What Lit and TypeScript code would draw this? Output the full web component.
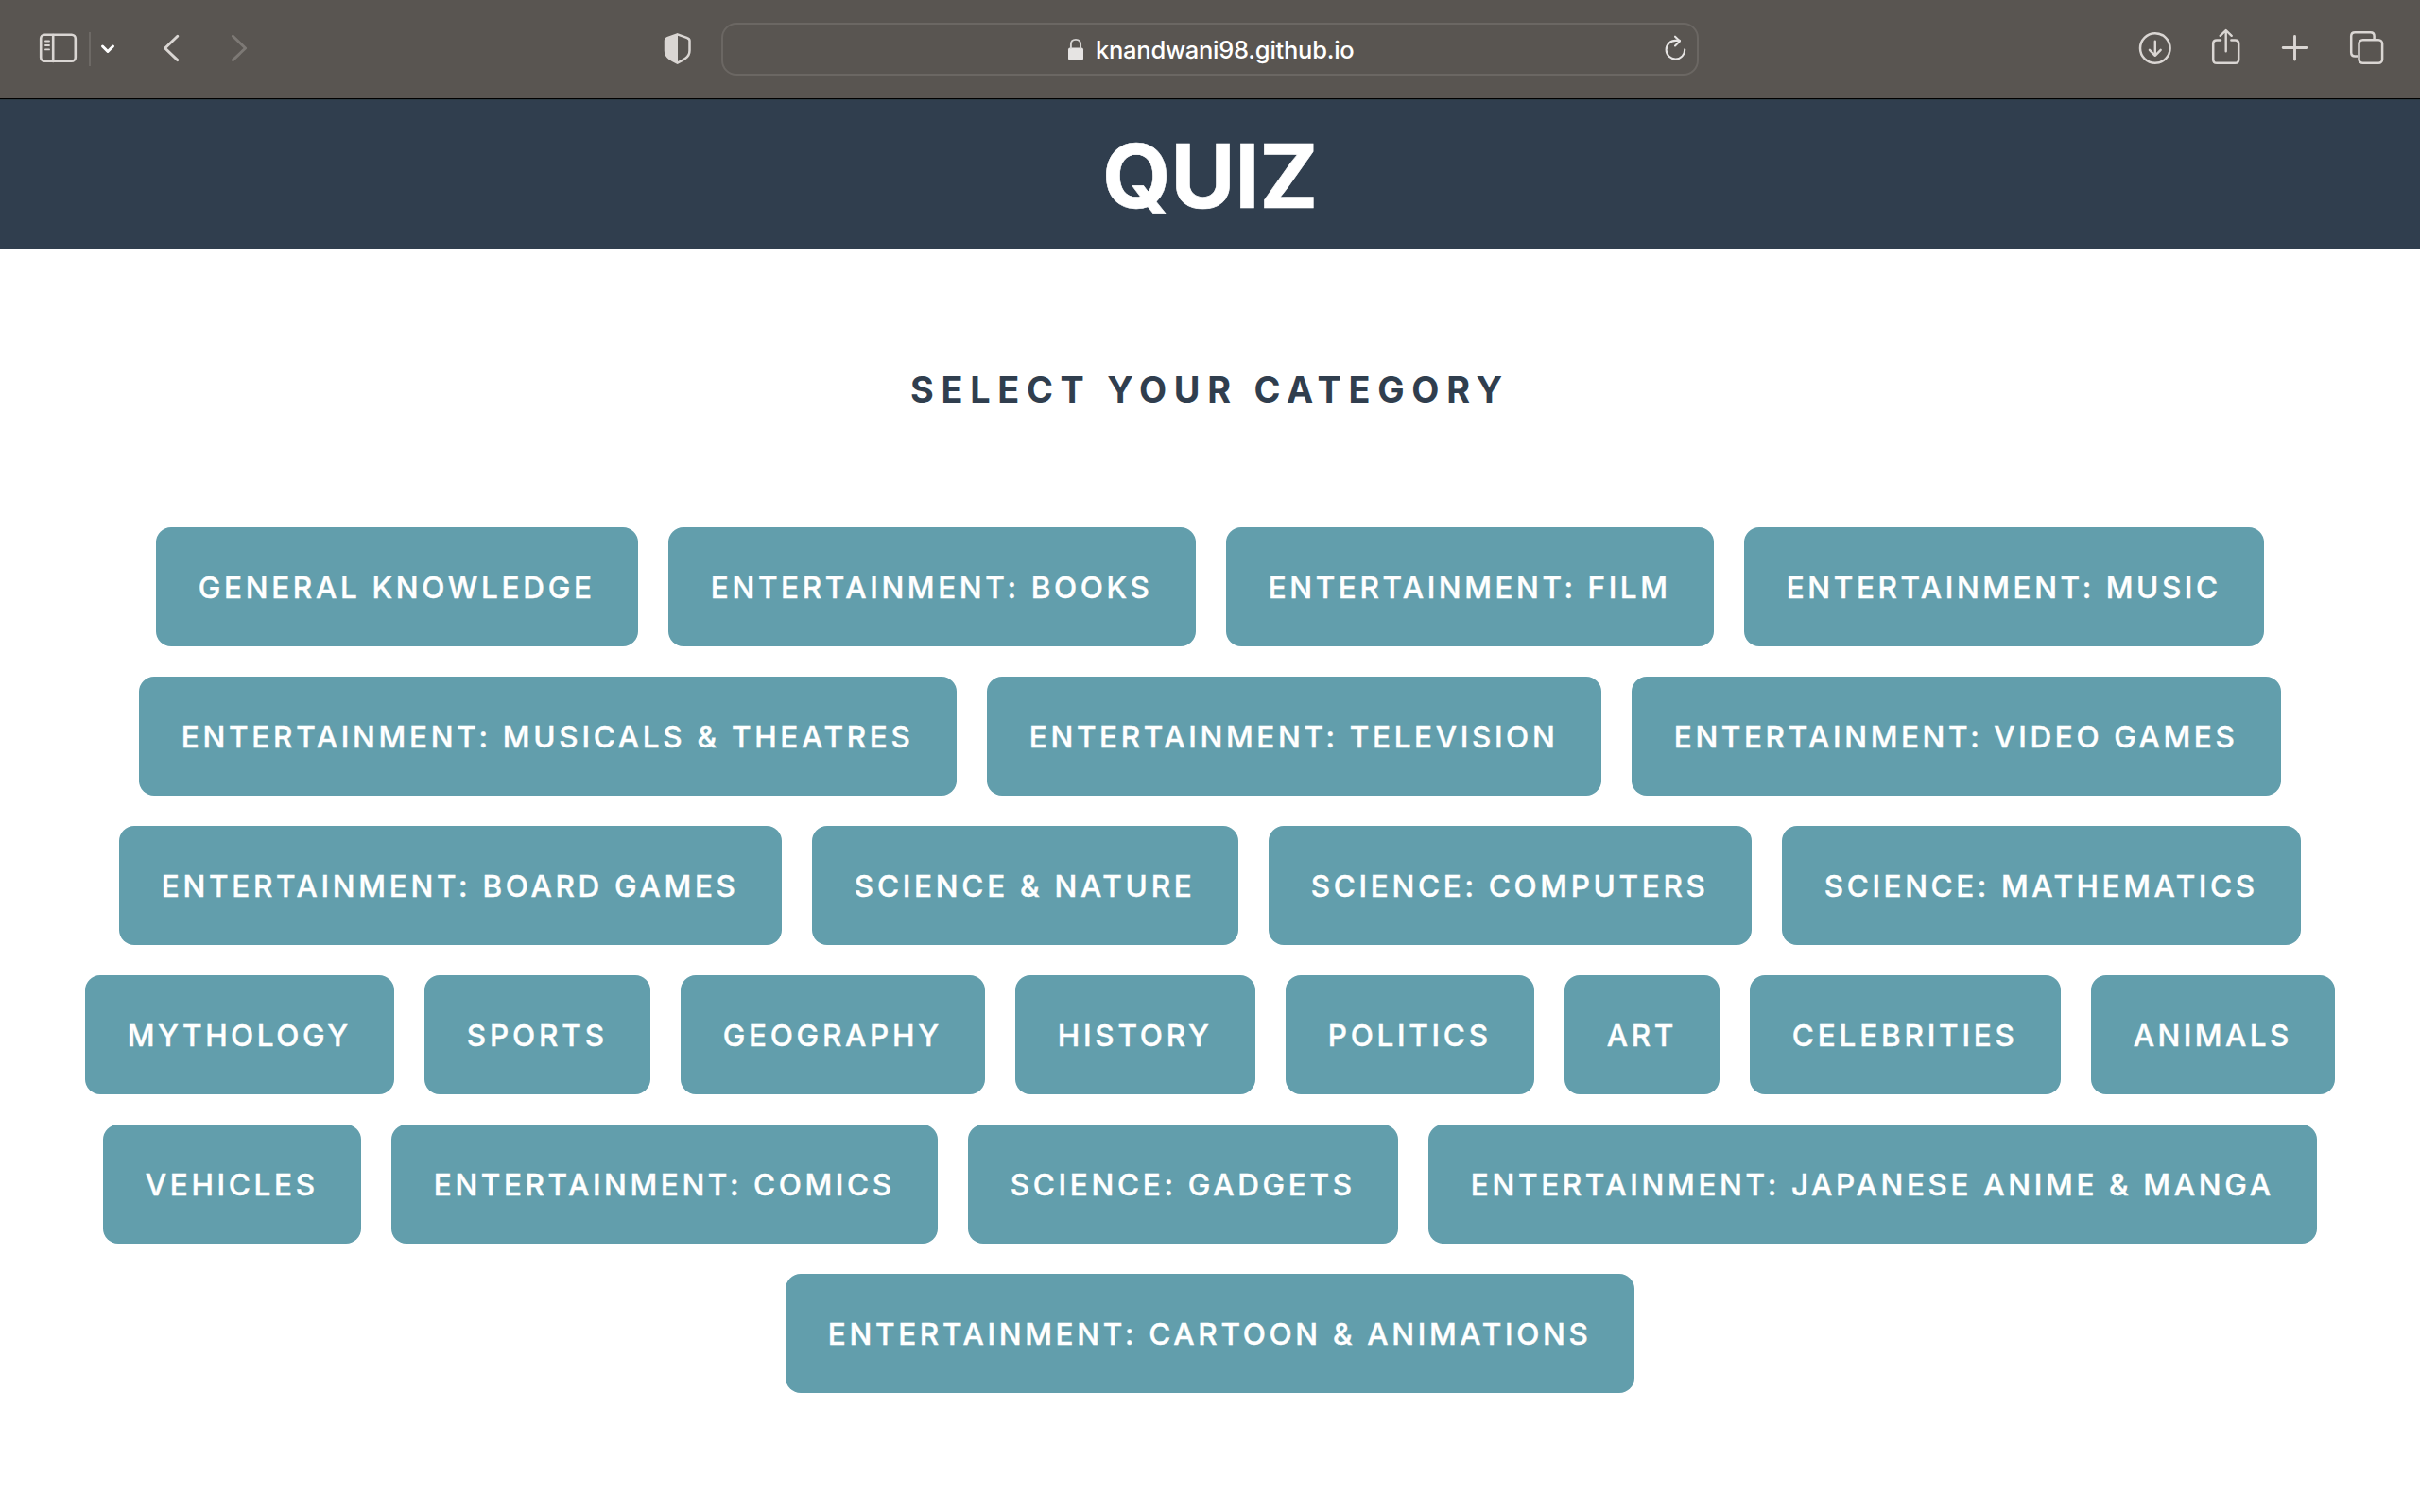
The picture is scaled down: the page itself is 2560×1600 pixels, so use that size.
import { LitElement, html, svg, css, type SVGTemplateResult } from "lit";
import { customElement, property } from "lit/decorators.js";
import { styleMap } from "lit/directives/style-map.js";

interface Category {
  name: string;
  width: number;
  tracking: number;
}

const row = (...items: [string, number, number][]): Category[] =>
  items.map(([name, width, tracking]) => ({ name, width, tracking }));

const ROWS: Category[][] = [
  row(
    ["General Knowledge", 510, 3.67],
    ["Entertainment: Books", 558, 3.63],
    ["Entertainment: Film", 516, 3.56],
    ["Entertainment: Music", 550, 3.57]
  ),
  row(
    ["Entertainment: Musicals & Theatres", 865, 3.71],
    ["Entertainment: Television", 650, 3.64],
    ["Entertainment: Video Games", 687, 3.61]
  ),
  row(
    ["Entertainment: Board Games", 701, 3.68],
    ["Science & Nature", 451, 3.73],
    ["Science: Computers", 511, 3.67],
    ["Science: Mathematics", 549, 3.58]
  ),
  row(
    ["Mythology", 327, 3.53],
    ["Sports", 239, 3.83],
    ["Geography", 322, 3.71],
    ["History", 254, 3.75],
    ["Politics", 263, 3.69],
    ["Art", 164, 3.57],
    ["Celebrities", 329, 3.81],
    ["Animals", 258, 3.43]
  ),
  row(
    ["Vehicles", 273, 3.67],
    ["Entertainment: Comics", 578, 3.59],
    ["Science: Gadgets", 455, 3.67],
    ["Entertainment: Japanese Anime & Manga", 940, 3.65]
  ),
  row(["Entertainment: Cartoon & Animations", 898, 3.67]),
];

/* Toolbar icons share one coordinate system: x runs along the toolbar, y is 0-104. */
const icon = (x: number, width: number, body: SVGTemplateResult) => html`
  <svg width=${width} height="104" viewBox="${x} 0 ${width} 104" fill="none"
    stroke="#dad6d3" stroke-width="2.6" stroke-linecap="round" stroke-linejoin="round">
    ${body}
  </svg>
`;

@customElement("browser-toolbar")
class BrowserToolbar extends LitElement {
  static styles = css`
    :host { display: block; }
    svg { display: block; flex: none; }
    .bar {
      box-sizing: border-box;
      height: 106px;
      display: flex;
      align-items: flex-start;
      background: #595551;
      border-bottom: 1px solid #2b3a43;
      box-shadow: inset 0 -1px 0 #000;
    }
    .side { display: flex; flex: none; box-sizing: border-box; }
    .left { width: 763px; padding-left: 36px; }
    .right { flex: 1; justify-content: flex-end; gap: 36px; padding-right: 34px; }
    .toggle { display: flex; gap: 6px; margin-right: 44px; }
    .history { display: flex; gap: 46px; }
    .shield { margin-left: auto; margin-right: 27px; }
    .field {
      box-sizing: border-box;
      width: 1034px;
      height: 56px;
      margin-top: 24px;
      padding: 0 8px 0 363px;
      border: 2px solid #6b6763;
      border-radius: 16px;
      display: flex;
      align-items: center;
      overflow: hidden;
    }
    .url {
      margin-left: 11px;
      padding-top: 1px;
      font-family: Inter, "Liberation Sans", sans-serif;
      font-size: 25.5px;
      font-weight: 500;
      letter-spacing: -0.25px;
      line-height: 52px;
      color: #fff;
      white-space: nowrap;
    }
    .reload { margin-left: auto; }
  `;

  render() {
    return html`
      <div class="bar">
        <div class="side left">
          <div class="toggle">
            ${icon(36, 52, svg`
              <rect x="43.2" y="36.8" width="36.6" height="28" rx="4"></rect>
              <path d="M56.2 37V65"></path>
              <path d="M48 43.5h4M48 48h4M48 52.4h4" stroke-width="1.9"></path>`)}
            ${icon(94, 30, svg`
              <path d="M95 34V70" stroke="#6d6965" stroke-width="2" stroke-linecap="butt"></path>
              <path d="M108.5 49L114 54.5L119.5 49" stroke="#fff" stroke-width="3"></path>`)}
          </div>
          <div class="history">
            ${icon(168, 26, svg`<path d="M187.8 38.2L174.6 51L187.8 63.6" stroke-width="2.9"></path>`)}
            ${icon(240, 26, svg`<path d="M246.4 38.2L259.6 51L246.4 63.6" stroke="#7d7975" stroke-width="2.9"></path>`)}
          </div>
          <div class="shield">
            ${icon(698, 38, svg`
              <path d="M716.6 36.3L727.1 40.2Q729.5 41 729.5 43V53.5Q729.5 58.6 725.1 61.7Q721.6 64.2 716.6 66.7Q711.6 64.2 708.1 61.7Q704 58.6 704 53.5V43Q704 41 706.1 40.2Z" stroke-width="2.5"></path>
              <path d="M717 36.3L706.1 40.2Q704 41 704 43V53.5Q704 58.6 708.1 61.7Q711.6 64.2 717 66.7Z" fill="#dad6d3" stroke="none"></path>`)}
          </div>
        </div>
        <div class="field">
          ${icon(1128, 20, svg`
            <rect x="1130" y="50.5" width="16" height="13.5" rx="2" fill="#e6e4e3" stroke="none"></rect>
            <path d="M1132.9 51V47Q1132.9 41.9 1138 41.9Q1143.1 41.9 1143.1 47V51" stroke="#d5d3d1" stroke-width="1.9"></path>`)}
          <span class="url">knandwani98.github.io</span>
          <div class="reload">
            ${icon(1757, 30, svg`
              <path d="M1782.2 52.3A9.8 9.8 0 1 1 1772.4 42.9H1776.8" stroke="#e6e4e3" stroke-width="2.1"></path>
              <path d="M1772 38.7L1777 43.4L1772 48.4" stroke="#e6e4e3" stroke-width="2.1"></path>`)}
          </div>
        </div>
        <div class="side right">
          ${icon(2258, 42, svg`
            <circle cx="2279.8" cy="51" r="15.8" stroke-width="2.5"></circle>
            <path d="M2279.8 43.7V58.8M2273.9 52.8L2279.8 58.8L2285.7 52.8" stroke-width="2.4"></path>`)}
          ${icon(2336, 38, svg`
            <path d="M2349 42.4H2345Q2341.2 42.4 2341.2 46.2V63Q2341.2 66.8 2345 66.8H2364.4Q2368.2 66.8 2368.2 63V46.2Q2368.2 42.4 2364.4 42.4H2360.4" stroke-width="2.5"></path>
            <path d="M2354.7 32.3V54.2M2348.7 37.8L2354.7 32L2360.7 37.8" stroke-width="2.4"></path>`)}
          ${icon(2410, 36, svg`<path d="M2427.5 38.4V63M2415.2 50.5H2439.8" stroke-width="2.9"></path>`)}
          ${icon(2482, 44, svg`
            <path d="M2494 59.4H2491.2Q2487.2 59.4 2487.2 55.4V38.2Q2487.2 34.2 2491.2 34.2H2507.6Q2511.6 34.2 2511.6 38.2V41.5" stroke-width="2.5" stroke-linecap="butt"></path>
            <rect x="2495.5" y="42.2" width="24.6" height="24.6" rx="4" stroke-width="2.5"></rect>`)}
        </div>
      </div>
    `;
  }
}

@customElement("category-button")
class CategoryButton extends LitElement {
  static styles = css`
    :host { display: block; }
    .button {
      box-sizing: border-box;
      display: block;
      height: 126px;
      margin: 0;
      padding: 1px 0 0 44.8px;
      border: 0;
      border-radius: 16px;
      background: #629eac;
      color: #fff;
      font-family: Inter, "Liberation Sans", sans-serif;
      font-size: 31.5px;
      font-weight: 500;
      -webkit-text-stroke: 0.4px #fff;
      line-height: 125px;
      text-align: left;
      text-transform: uppercase;
      white-space: nowrap;
    }
  `;

  @property({ attribute: false }) category!: Category;

  render() {
    const { name, width, tracking } = this.category;
    return html`<button class="button"
      style=${styleMap({ width: `${width}px`, letterSpacing: `${tracking}px` })}>${name}</button>`;
  }
}

@customElement("app-root")
class AppRoot extends LitElement {
  static styles = css`
    :host {
      display: block;
      font-family: Inter, "Liberation Sans", sans-serif;
    }
    .page { height: 1600px; overflow: hidden; background: #fff; }
    .header {
      height: 158px;
      display: flex;
      align-items: center;
      justify-content: center;
      background: #303e4e;
    }
    .logo {
      margin: 0;
      padding-top: 4px;
      font-size: 93.5px;
      font-weight: 700;
      line-height: 1;
      letter-spacing: -0.3px;
      -webkit-text-stroke: 0.6px #fff;
      color: #fff;
    }
    .title {
      margin: 0;
      padding: 117px 0 115px;
      font-size: 37.8px;
      font-weight: 700;
      line-height: 62px;
      letter-spacing: 7.72px;
      text-align: center;
      text-transform: uppercase;
      color: #303e4e;
    }
    .categories { display: flex; flex-direction: column; gap: 32px; }
    .row { display: flex; justify-content: center; gap: 32px; }
  `;

  render() {
    return html`
      <div class="page">
        <browser-toolbar></browser-toolbar>
        <header class="header"><h1 class="logo">QUIZ</h1></header>
        <h2 class="title">Select your category</h2>
        <main class="categories">
          ${ROWS.map(
            (items) => html`<div class="row">
              ${items.map((c) => html`<category-button .category=${c}></category-button>`)}
            </div>`
          )}
        </main>
      </div>
    `;
  }
}
